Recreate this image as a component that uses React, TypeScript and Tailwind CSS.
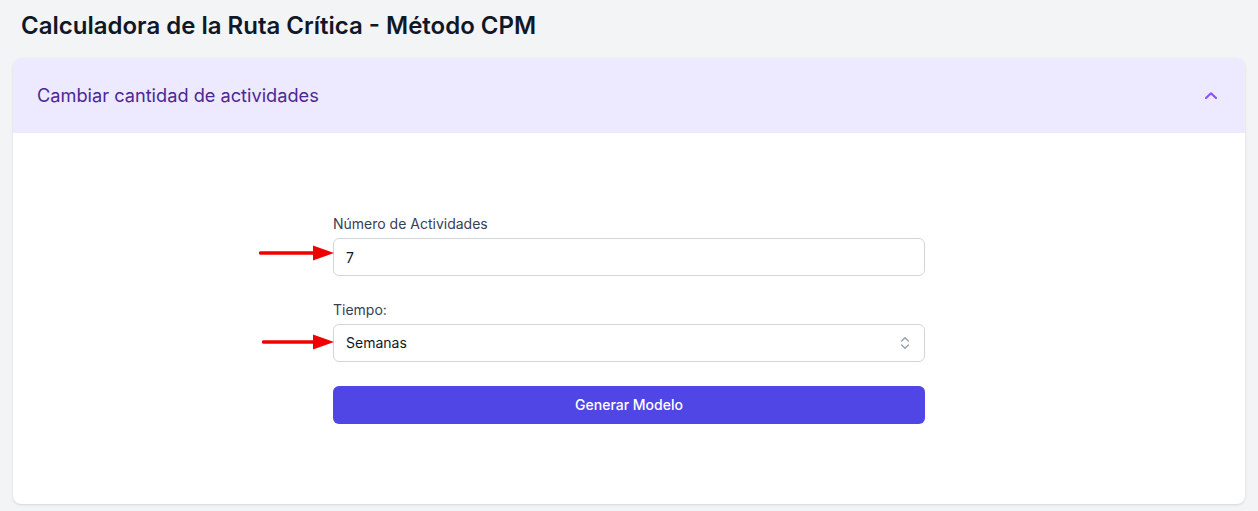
import { ChevronsUpDown } from 'lucide-react';

function Arrow({ width }: { width: number }) {
  return (
    <svg width={width} height="16" viewBox={`0 0 ${width} 16`} className="shrink-0 block">
      <line x1="1.5" y1="8" x2={width - 18} y2="8" stroke="#f00000" strokeWidth="3.5" strokeLinecap="round" />
      <polygon points={`${width - 21},0.5 ${width},8 ${width - 21},15.5`} fill="#f00000" />
    </svg>
  );
}

export default function App() {
  return (
    <div className="min-h-screen bg-gray-100 px-[13px] pb-2 font-['Inter',sans-serif]">
      <h1 className="px-2 pt-[9px] pb-[15px] text-[24px] leading-[34px] font-semibold text-gray-900">
        Calculadora de la Ruta Crítica - Método CPM
      </h1>

      <div className="bg-white rounded-lg shadow-sm overflow-hidden">
        <button className="w-full h-[75px] flex items-center justify-between bg-violet-100 pl-6 pr-[28px] text-left">
          <span className="text-[18.2px] text-[#4c2795]">Cambiar cantidad de actividades</span>
          <svg width="12" height="7" viewBox="0 0 12 7" className="text-violet-500">
            <path d="M1 6 L6 1.3 L11 6" fill="none" stroke="currentColor" strokeWidth="2.2" strokeLinecap="round" strokeLinejoin="round" />
          </svg>
        </button>

        <div className="pt-[81px] pb-[80px]">
          <div className="w-[592px] mx-auto flex flex-col">
            <label className="text-sm text-gray-700 mb-[4px]">Número de Actividades</label>
            <div className="relative">
              <div className="absolute left-[-74px] top-[7px]">
                <Arrow width={75} />
              </div>
              <input
                type="number"
                defaultValue={7}
                className="w-full h-[38px] rounded-md border border-gray-300 px-3 text-sm text-gray-900 outline-none"
              />
            </div>

            <label className="text-sm text-gray-700 mt-[24px] mb-[4px]">Tiempo:</label>
            <div className="relative">
              <div className="absolute left-[-71px] top-[10px]">
                <Arrow width={72} />
              </div>
              <div className="w-full h-[38px] rounded-md border border-gray-300 pl-3 pr-[11px] text-sm text-gray-900 flex items-center justify-between">
                <span>Semanas</span>
                <ChevronsUpDown className="w-4 h-4 text-gray-400" strokeWidth={2.2} />
              </div>
            </div>

            <button className="mt-6 h-[38px] rounded-md bg-[#5046e5] text-white text-sm font-medium">
              Generar Modelo
            </button>
          </div>
        </div>
      </div>
    </div>
  );
}
